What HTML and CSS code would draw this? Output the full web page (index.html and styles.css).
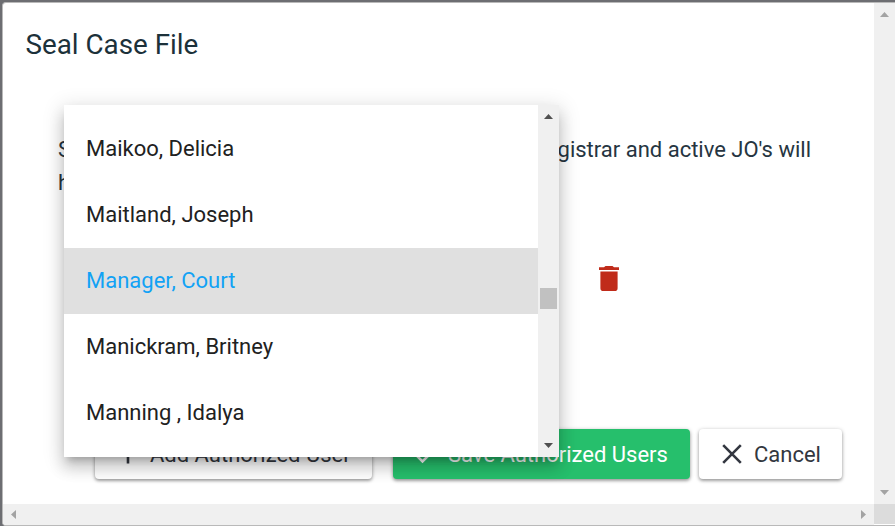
FILE: index.html
```html
<!DOCTYPE html>
<html lang="en">
<head>
<meta charset="utf-8">
<title>Seal Case File</title>
<link rel="stylesheet" href="styles.css">
</head>
<body>
<div class="dialog">
  <main class="content">
    <h1>Seal Case File</h1>
    <div class="message">
      <p class="line"><span>S</span><span>gistrar and active JO's will</span></p>
      <p class="line"><span>h</span></p>
    </div>
    <div class="user-row">
      <svg class="trash" viewBox="0 0 20 25" width="20" height="25"><path fill="#c02b1a" d="M0 1.2h5L6.5 0h7L15 1.2h5V4H0zM1.4 5.4h17.2v16.8q0 2.8-2.8 2.8H4.2q-2.8 0-2.8-2.8z"/></svg>
    </div>
    <div class="actions">
      <button class="btn add"><svg viewBox="0 0 20 20" width="20" height="20"><path d="M10 1v18.5M1 10h18"/></svg><span>Add Authorized User</span></button>
      <button class="btn save"><svg viewBox="0 0 20 20" width="20" height="20"><path d="M0 11l6.5 6.5L19 5"/></svg><span>Save Authorized Users</span></button>
      <button class="btn cancel"><svg viewBox="0 0 20 20" width="20" height="20"><path d="M1.2 1.2l17.6 17.6M18.8 1.2L1.2 18.8"/></svg><span>Cancel</span></button>
    </div>
  </main>
  <div class="vbar"><i class="arrow up"></i><i class="arrow down"></i></div>
  <div class="hbar"><i class="arrow left"></i><i class="arrow right"></i></div>
  <div class="corner"></div>
</div>
<div class="menu">
  <ul>
    <li>Maikoo, Delicia</li>
    <li>Maitland, Joseph</li>
    <li class="active">Manager, Court</li>
    <li>Manickram, Britney</li>
    <li>Manning , Idalya</li>
  </ul>
  <div class="menu-bar"><i class="arrow up"></i><i class="thumb"></i><i class="arrow down"></i></div>
</div>
</body>
</html>
```
FILE: styles.css
```css
* { box-sizing: border-box; }
body {
  margin: 0;
  width: 895px;
  height: 526px;
  padding: 2px 0 0 2px;
  overflow: hidden;
  background: #6d6e72;
  font: 22px/32px Roboto, sans-serif;
  color: #263541;
}
.dialog {
  display: grid;
  grid-template-columns: 871px 21px;
  grid-template-rows: 501px 21px;
  width: 893px;
  height: 524px;
  border: 1px solid #b9b9b9;
  border-right: 0;
  border-radius: 4px 0 0 4px;
  background: #fff;
  overflow: hidden;
}
.content { display: flex; flex-direction: column; }
h1 {
  margin: 24px 0 0 22.5px;
  font-size: 27.8px;
  font-weight: 400;
  line-height: 36px;
  color: #1c313a;
}
.message { margin: 70px 63px 0 55px; }
.line { display: flex; justify-content: space-between; margin: 0; height: 33px; line-height: 33px; }
.user-row { display: flex; margin: 67px 0 0 596px; }
.actions { display: flex; margin: 138px 0 0 92px; }
.btn {
  display: flex;
  align-items: center;
  height: 50px;
  padding: 0 22px 0 23px;
  border: 0;
  border-radius: 4px;
  background: #fff;
  color: #333740;
  font: 22px/46px Roboto, sans-serif;
  white-space: nowrap;
  box-shadow: 0 1px 4px rgba(0,0,0,.28), 0 2px 3px rgba(0,0,0,.22);
}
.btn svg { flex: none; fill: none; stroke: #333740; stroke-width: 2.6; margin-right: 12px; }
.btn span { padding-top: 2px; }
.add { width: 277px; margin-right: 21px; }
.save { width: 297px; margin-right: 9px; background: #26bf6c; color: #fff; }
.save svg { stroke: #fff; }
.cancel { width: 143px; }
.vbar, .menu-bar { display: flex; flex-direction: column; align-items: center; justify-content: space-between; background: #f0f0f0; }
.vbar { padding: 9px 0; }
.hbar { display: flex; align-items: center; justify-content: space-between; padding: 0 8px; background: #f0f0f0; }
.corner { height: 20px; background: #dcdcdc; }
.arrow { width: 9px; height: 5px; background: #a3a3a3; }
.up { clip-path: polygon(50% 0, 100% 100%, 0 100%); }
.down { clip-path: polygon(0 0, 100% 0, 50% 100%); }
.left, .right { width: 5px; height: 9px; }
.left { clip-path: polygon(100% 0, 100% 100%, 0 50%); }
.right { clip-path: polygon(0 0, 100% 50%, 0 100%); }
.menu {
  position: absolute;
  left: 64px;
  top: 105px;
  display: flex;
  width: 495px;
  height: 352px;
  background: #fff;
  box-shadow: 0 7px 7px -4px rgba(0,0,0,.2), 0 11px 14px 1px rgba(0,0,0,.14), 0 4px 19px 3px rgba(0,0,0,.12);
}
.menu ul { flex: 1; margin: 0; padding: 11px 0 0; list-style: none; }
.menu li { height: 66px; padding-left: 22px; line-height: 66px; color: #212121; }
.menu .active { background: #e0e0e0; color: #12a2f5; }
.menu-bar { width: 21px; padding: 9px 0; }
.menu-bar .arrow { background: #505050; }
.thumb { width: 17px; height: 21px; margin-top: 169px; margin-bottom: auto; background: #c1c1c1; }
```
